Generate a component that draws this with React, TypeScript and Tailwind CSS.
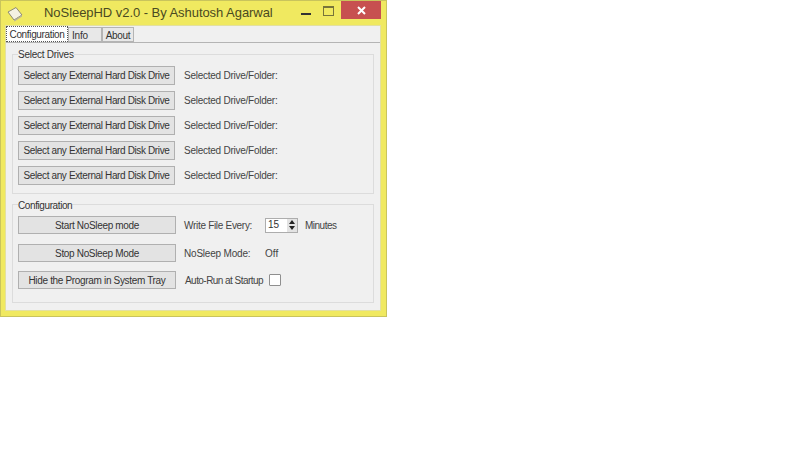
import React from "react";

const DriveRow = () => (
  <div className="flex items-center h-[19px] mb-[6px]">
    <button className="w-[157px] h-[19px] bg-[#e3e3e3] border border-[#b0b0b0] text-[#333] text-[10px] tracking-[-0.37px] leading-none whitespace-nowrap">
      Select any External Hard Disk Drive
    </button>
    <span className="ml-[9px] text-[#444] text-[10px] tracking-[-0.25px]">Selected Drive/Folder:</span>
  </div>
);

const ConfigButton = ({ label }: { label: string }) => (
  <button className="w-[158px] h-[18px] pt-px bg-[#e3e3e3] border border-[#b0b0b0] text-[#333] text-[10px] tracking-[-0.33px] leading-none whitespace-nowrap">
    {label}
  </button>
);

const App = () => {
  return (
    <div className="w-[800px] h-[450px] bg-white font-['Liberation_Sans',sans-serif]">
      <div className="w-[387px] h-[317px] bg-[#f0e960] border border-[#c9c45c] flex flex-col">
        {/* title bar */}
        <div className="h-[24px] flex items-start shrink-0">
          <svg width="18" height="16" viewBox="0 0 18 16" className="ml-[6px] mt-[5px] shrink-0">
            <path d="M1 6 L9 1.5 L15 9 L7 14 Z" fill="#f4f1e2" stroke="#8d8a70" strokeWidth="1" />
            <path d="M7 14 L15 9 L15 10.5 L7.5 15.5 Z" fill="#b5b29a" />
          </svg>
          <span className="ml-[19px] mt-[3px] text-[13px] tracking-[-0.05px] leading-[18px] text-[#4a4a22] whitespace-nowrap">
            NoSleepHD v2.0 - By Ashutosh Agarwal
          </span>
          <svg width="12" height="12" viewBox="0 0 12 12" className="ml-auto mt-[6px] shrink-0">
            <rect x="1" y="6" width="10" height="2" fill="#333" />
          </svg>
          <div className="ml-[11px] mt-[5px] w-[11px] h-[10px] border border-[#77743a] border-t-2 shrink-0" />
          <div className="ml-[7px] mr-[5px] w-[40px] h-[18px] bg-[#c75050] flex items-center justify-center shrink-0">
            <svg width="9" height="9" viewBox="0 0 9 9">
              <path d="M1 1 L8 8 M8 1 L1 8" stroke="#fff" strokeWidth="2" />
            </svg>
          </div>
        </div>

        {/* client */}
        <div className="mx-[4px] w-[376px] h-[286px] bg-[#f0f0f0] border border-[#e3e0a0] flex flex-col">
          <div className="h-[17px] flex items-end border-b border-[#b4b4b4] shrink-0">
            <div className="h-[16px] w-[62px] pt-px bg-white border border-dotted border-[#555] text-[10px] tracking-[-0.35px] leading-[14px] text-[#333] text-center whitespace-nowrap">
              Configuration
            </div>
            <div className="h-[15px] w-[34px] pt-px bg-[#e8e8e8] border border-[#b4b4b4] text-[10px] tracking-[-0.2px] leading-[13px] text-[#333] pl-[3px]">
              Info
            </div>
            <div className="h-[15px] w-[32px] pt-px bg-[#e8e8e8] border border-[#b4b4b4] text-[10px] tracking-[-0.3px] leading-[13px] text-[#333] text-center">
              About
            </div>
          </div>

          <div className="px-[6px] pt-[11px] flex flex-col">
            <div className="w-[362px] h-[140px] border border-[#dcdcdc] pl-[5px] shrink-0">
              <div className="-mt-[7px] h-[14px] w-fit bg-[#f0f0f0] text-[10px] tracking-[-0.25px] leading-[14px] text-[#333]">
                Select Drives
              </div>
              <div className="mt-[4px]">
                <DriveRow />
                <DriveRow />
                <DriveRow />
                <DriveRow />
                <DriveRow />
              </div>
            </div>

            <div className="w-[362px] h-[99px] mt-[10px] border border-[#dcdcdc] pl-[5px] shrink-0">
              <div className="-mt-[6px] h-[13px] w-fit bg-[#f0f0f0] text-[10px] tracking-[-0.4px] leading-[14px] text-[#333]">
                Configuration
              </div>
              <div className="mt-[4px] flex items-center h-[18px]">
                <ConfigButton label="Start NoSleep mode" />
                <span className="ml-[8px] mt-px w-[81px] text-[10px] tracking-[-0.3px] text-[#444]">Write File Every:</span>
                <div className="w-[33px] h-[15px] bg-white border border-[#adadad] flex items-center justify-between">
                  <span className="ml-[2px] text-[10px] leading-none text-[#333]">15</span>
                  <div className="w-[10px] h-[13px] flex flex-col">
                    <div className="h-[6.5px] bg-[#e3e3e3] flex items-center justify-center">
                      <svg width="6" height="4" viewBox="0 0 6 4"><path d="M3 0 L6 4 L0 4 Z" fill="#222" /></svg>
                    </div>
                    <div className="h-[6.5px] bg-[#e3e3e3] flex items-center justify-center">
                      <svg width="6" height="4" viewBox="0 0 6 4"><path d="M0 0 L6 0 L3 4 Z" fill="#222" /></svg>
                    </div>
                  </div>
                </div>
                <span className="ml-[7px] mt-px text-[10px] tracking-[-0.5px] text-[#444]">Minutes</span>
              </div>
              <div className="mt-[10px] flex items-center h-[18px]">
                <ConfigButton label="Stop NoSleep Mode" />
                <span className="ml-[8px] mt-px w-[81px] text-[10px] tracking-[-0.2px] text-[#444]">NoSleep Mode:</span>
                <span className="mt-px text-[10px] text-[#444]">Off</span>
              </div>
              <div className="mt-[9px] flex items-center h-[18px]">
                <ConfigButton label="Hide the Program in System Tray" />
                <span className="ml-[9px] text-[10px] tracking-[-0.55px] text-[#444]">Auto-Run at Startup</span>
                <div className="ml-[6px] w-[12px] h-[12px] bg-white border border-[#8f8f8f] rounded-[1px]" />
              </div>
            </div>
          </div>
        </div>
      </div>
    </div>
  );
};

export default App;
